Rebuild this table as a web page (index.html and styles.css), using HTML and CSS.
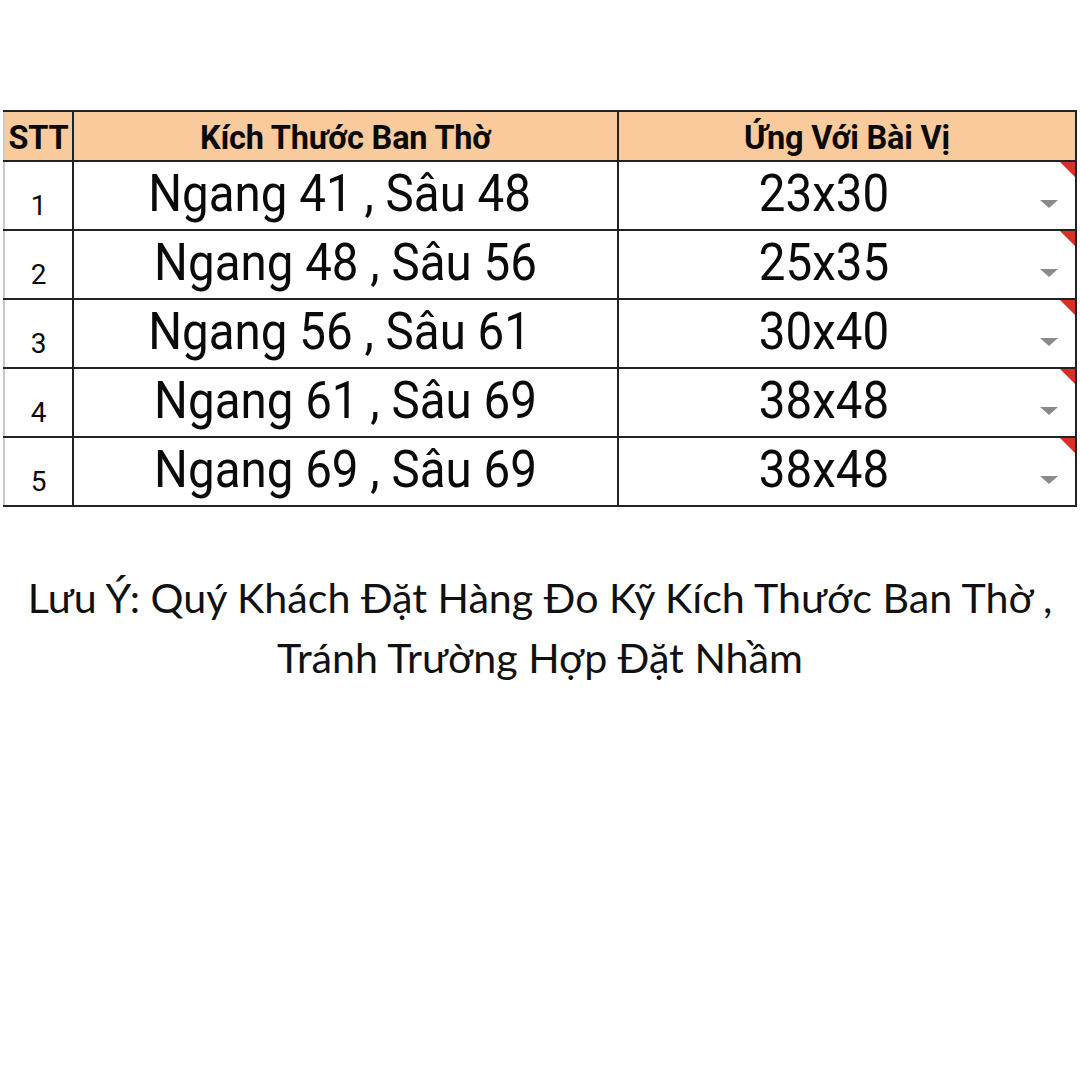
FILE: index.html
```html
<!DOCTYPE html>
<html lang="vi">
<head>
<meta charset="utf-8">
<link rel="stylesheet" href="styles.css">
</head>
<body>
<div class="page">
  <table class="sheet">
    <colgroup>
      <col class="c-stt">
      <col class="c-size">
      <col class="c-tablet">
    </colgroup>
    <thead>
      <tr>
        <th class="stt">STT</th>
        <th>Kích Thước Ban Thờ</th>
        <th>Ứng Với Bài Vị</th>
      </tr>
    </thead>
    <tbody>
      <tr>
        <td class="stt">1</td>
        <td class="size"><span class="tall">Ngang 41 , Sâu 48 </span></td>
        <td class="tablet"><span class="tall">23x30</span><span class="note-mark"></span><span class="arrow"></span></td>
      </tr>
      <tr>
        <td class="stt">2</td>
        <td class="size"><span class="tall">Ngang 48 , Sâu 56</span></td>
        <td class="tablet"><span class="tall">25x35</span><span class="note-mark"></span><span class="arrow"></span></td>
      </tr>
      <tr>
        <td class="stt">3</td>
        <td class="size"><span class="tall">Ngang 56 , Sâu 61 </span></td>
        <td class="tablet"><span class="tall">30x40</span><span class="note-mark"></span><span class="arrow"></span></td>
      </tr>
      <tr>
        <td class="stt">4</td>
        <td class="size"><span class="tall">Ngang 61 , Sâu 69</span></td>
        <td class="tablet"><span class="tall">38x48</span><span class="note-mark"></span><span class="arrow"></span></td>
      </tr>
      <tr>
        <td class="stt">5</td>
        <td class="size"><span class="tall">Ngang 69 , Sâu 69</span></td>
        <td class="tablet"><span class="tall">38x48</span><span class="note-mark"></span><span class="arrow"></span></td>
      </tr>
    </tbody>
  </table>
  <p class="note">Lưu Ý: Quý Khách Đặt Hàng Đo Kỹ Kích Thước Ban Thờ ,<br>Tránh Trường Hợp Đặt Nhầm </p>
</div>
</body>
</html>
```
FILE: styles.css
```css
html, body {
  margin: 0;
  padding: 0;
  background: #ffffff;
}

.page {
  width: 1080px;
  height: 1080px;
  padding-top: 110px;
  box-sizing: border-box;
}

.sheet {
  margin-left: 3px;
  width: 1072px;
  border-collapse: collapse;
  table-layout: fixed;
  font-family: Roboto, "Liberation Sans", sans-serif;
  color: #0a0a0a;
}

.c-stt { width: 69px; }
.c-size { width: 545px; }
.c-tablet { width: 458px; }

.sheet th,
.sheet td {
  border: 2px solid #222;
  padding: 0;
  text-align: center;
  vertical-align: bottom;
  white-space: pre;
}

.sheet th:first-child,
.sheet td:first-child {
  border-left: 2px solid #c8c8c8;
}

.sheet th {
  background: #f9cb9c;
  height: 48px;
  font-size: 32.5px;
  font-weight: 700;
  line-height: 44px;
  letter-spacing: -0.2px;
}

.sheet td {
  height: 58px;
  padding-bottom: 9px;
}

.sheet td.stt {
  font-size: 28px;
  line-height: 28px;
}

.sheet td.size,
.sheet td.tablet {
  font-size: 47.5px;
  line-height: 50px;
}

.tall {
  display: inline-block;
  transform: scaleY(1.08);
  transform-origin: 50% 80%;
}

.sheet td.tablet {
  position: relative;
  padding-right: 46px;
}

.note-mark {
  position: absolute;
  top: 0;
  right: 0;
  width: 0;
  height: 0;
  border-top: 15px solid #d93025;
  border-left: 15px solid transparent;
}

.arrow {
  position: absolute;
  top: 38px;
  right: 17px;
  width: 0;
  height: 0;
  border-top: 8px solid #8a8a8a;
  border-left: 9px solid transparent;
  border-right: 9px solid transparent;
}

.note {
  margin: 60px 0 0;
  white-space: pre-line;
  text-align: center;
  font-family: Lato, "Open Sans", sans-serif;
  font-size: 41.2px;
  line-height: 60px;
  color: #111;
}
```
